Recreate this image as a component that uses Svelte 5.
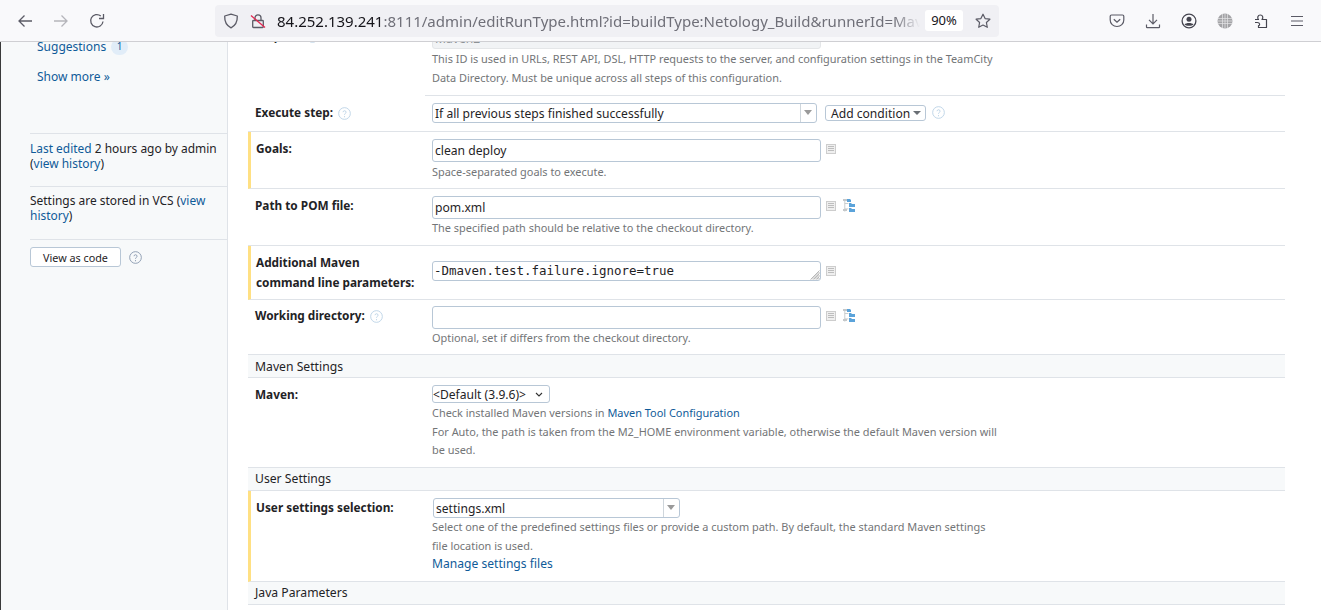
<script>
  const fileTree = 'M2 1v13M2 5h4M2 11h4';
  const chevron = `url("data:image/svg+xml,%3Csvg xmlns='http://www.w3.org/2000/svg' width='8' height='5'%3E%3Cpath d='M1 1l3 3 3-3' fill='none' stroke='%23333' stroke-width='1.1'/%3E%3C/svg%3E")`;
</script>

{#snippet help(cls = '')}
  <svg class="help {cls}" viewBox="0 0 14 14" width="13" height="13" aria-hidden="true">
    <circle cx="7" cy="7" r="6.300" fill="none" stroke="currentColor" />
    <path d="M5.400 5.600c0-2.100 3.300-2.100 3.300 0 0 1.300-1.700 1.300-1.700 2.800" fill="none" stroke="currentColor" />
    <circle cx="7" cy="10.400" r=".6" fill="currentColor" />
  </svg>
{/snippet}

{#snippet listIcon()}
  <svg class="side-icon" viewBox="0 0 10 10" width="10" height="10" aria-hidden="true">
    <rect x=".5" y=".5" width="9" height="9" fill="#efefef" stroke="#cdcdcd" />
    <path d="M2 2.500h6M2 4.500h6M2 6.500h6" stroke="#bdbdbd" />
  </svg>
{/snippet}

{#snippet treeIcon()}
  <svg class="side-icon tree" viewBox="0 0 13 13" width="13" height="13" aria-hidden="true">
    <path d={fileTree} fill="none" stroke="#c4c8ca" transform="scale(.9)" />
    <path d="M0 0h4v2H0zM0 10h4v2H0z" fill="#c4c8ca" />
    <path d="M4 0h3l1 1v2H4zM6 4h2l1 1h3v3H6zM6 9h2l1 1h3v3H6z" fill="#5ba3da" />
  </svg>
{/snippet}

<div class="page">
  <header class="toolbar">
    <div class="nav">
      <svg viewBox="0 0 16 16" width="16" height="16" aria-hidden="true"><path d="M15 8H2M7.500 2.500 2 8l5.500 5.500" fill="none" stroke="#5b5b66" stroke-width="1.300" /></svg>
      <svg viewBox="0 0 16 16" width="16" height="16" aria-hidden="true"><path d="M1 8h13M8.500 2.500 14 8l-5.500 5.500" fill="none" stroke="#b5b5ba" stroke-width="1.300" /></svg>
      <svg viewBox="0 0 16 16" width="16" height="16" aria-hidden="true"><path d="M14 8.500A6.200 6.200 0 1 1 11.800 3M14.500 1v4.500H10" fill="none" stroke="#5b5b66" stroke-width="1.300" /></svg>
    </div>
    <div class="urlbar">
      <svg class="shield" viewBox="0 0 16 16" width="16" height="16" aria-hidden="true"><path d="M8 1.200 14.300 3c.2 5.500-1.600 9.500-6.300 11.800C3.300 12.500 1.500 8.500 1.700 3z" fill="none" stroke="#5b5b66" stroke-width="1.300" stroke-linejoin="round" /></svg>
      <svg class="lock" viewBox="0 0 16 16" width="16" height="16" aria-hidden="true">
        <path d="M5 7.500V4.800a3 3 0 0 1 6 0v2.700M3.500 7.500h9c.5 0 .8.300.8.800v5.400c0 .5-.3.800-.8.800h-9c-.5 0-.8-.3-.8-.8V8.300c0-.5.300-.8.800-.8z" fill="none" stroke="#5b5b66" stroke-width="1.300" />
        <path d="m1 2.500 14 12" stroke="#e22850" stroke-width="1.300" />
      </svg>
      <div class="url"><span class="host">84.252.139.241</span>:8111/admin/editRunType.html?id=buildType:Netology_Build&amp;runnerId=Mav</div>
      <span class="zoom-level">90%</span>
      <svg class="star" viewBox="0 0 16 16" width="16" height="16" aria-hidden="true"><path d="m8 1.200 2.100 4.400 4.800.6-3.500 3.300.9 4.800L8 12l-4.300 2.300.9-4.800L1.100 6.200l4.800-.6z" fill="none" stroke="#5b5b66" stroke-width="1.200" stroke-linejoin="round" /></svg>
    </div>
    <div class="tools">
      <svg viewBox="0 0 16 16" width="16" height="16" aria-hidden="true"><path d="M2.500 2h11c.8 0 1.300.5 1.300 1.300V7c0 3.800-3 6.500-6.800 6.500S1.200 10.800 1.200 7V3.300C1.200 2.500 1.700 2 2.500 2z" fill="none" stroke="#5b5b66" stroke-width="1.200" /><path d="m4.800 6.200 3.200 3 3.200-3" fill="none" stroke="#5b5b66" stroke-width="1.300" /></svg>
      <svg viewBox="0 0 16 16" width="16" height="16" aria-hidden="true"><path d="M8 1v9.500M4 6.800l4 4 4-4M1.500 11.500V14c0 .4.200.6.600.6h11.800c.4 0 .6-.2.600-.6v-2.500" fill="none" stroke="#5b5b66" stroke-width="1.200" /></svg>
      <svg viewBox="0 0 16 16" width="16" height="16" aria-hidden="true"><circle cx="8" cy="8" r="6.900" fill="none" stroke="#45454f" stroke-width="1.300" /><circle cx="8" cy="6.300" r="2.500" fill="#45454f" /><path d="M3.500 11.500c1.500-2 7.500-2 9 0-1.500 1.800-7.500 1.800-9 0z" fill="#45454f" /></svg>
      <svg viewBox="0 0 16 16" width="16" height="16" aria-hidden="true"><circle cx="8" cy="8" r="7.500" fill="#a3a3a6" /><path d="M.5 5.500h15M.5 8h15M.5 10.500h15M5.500 1v14M8 .5v15M10.500 1v14" stroke="#e6e6e8" stroke-width=".7" /></svg>
      <svg viewBox="0 0 16 16" width="16" height="16" aria-hidden="true"><path d="M2 6.500h3.500c-1.500-1.500-.8-4.500 1.800-4.500s3.200 3 1.700 4.500h4.500v8H5.500v-1.800c1.500 0 1.800-3.200-1.200-3.200H2" fill="none" stroke="#45454f" stroke-width="1.200" stroke-linejoin="round" /></svg>
      <svg viewBox="0 0 16 16" width="16" height="16" aria-hidden="true"><path d="M2 3.500h12M2 8h12M2 12.500h12" stroke="#5b5b66" stroke-width="1.200" /></svg>
    </div>
  </header>

  <div class="body">
    <aside class="sidebar">
      <div class="side-links">
        <div class="side-link"><a href="#s">Suggestions</a><span class="count">1</span></div>
        <div class="side-link"><a href="#m">Show more »</a></div>
      </div>
      <div class="side-block edited"><a href="#e">Last edited</a> 2 hours ago by admin<br />(<a href="#h">view history</a>)</div>
      <div class="side-block vcs">Settings are stored in VCS (<a href="#h">view<br />history</a>)</div>
      <div class="code-row">
        <button class="code-btn">View as code</button>
        {@render help('grey')}
      </div>
    </aside>

    <main class="main">
      <div class="form">
        <div class="row first">
          <div class="label">Step ID:{@render help()}</div>
          <div class="value">
            <input class="field disabled" value="Maven2" disabled />
            <p class="note">This ID is used in URLs, REST API, DSL, HTTP requests to the server, and configuration settings in the TeamCity<br />Data Directory. Must be unique across all steps of this configuration.</p>
          </div>
        </div>

        <div class="row execute">
          <div class="label">Execute step:{@render help()}</div>
          <div class="value inline">
            <div class="combo wide"><span>If all previous steps finished successfully</span><i class="arrow-box"></i></div>
            <button class="cond">Add condition <i class="caret"></i></button>
            {@render help()}
          </div>
        </div>

        <div class="row goals changed">
          <div class="label">Goals:</div>
          <div class="value">
            <div class="line"><input class="field" value="clean deploy" />{@render listIcon()}</div>
            <p class="note">Space-separated goals to execute.</p>
          </div>
        </div>

        <div class="row pom">
          <div class="label">Path to POM file:</div>
          <div class="value">
            <div class="line"><input class="field" value="pom.xml" />{@render listIcon()}{@render treeIcon()}</div>
            <p class="note tight">The specified path should be relative to the checkout directory.</p>
          </div>
        </div>

        <div class="row extra changed">
          <div class="label">Additional Maven<br />command line parameters:</div>
          <div class="value">
            <div class="line">
              <div class="area-wrap">
                <textarea class="field mono" rows="1">-Dmaven.test.failure.ignore=true</textarea>
                <svg class="grip" viewBox="0 0 10 10" width="10" height="10" aria-hidden="true"><path d="M9.500 .5 .5 9.500M9.500 2 2 9.500M9.500 3.500 3.500 9.500M9.500 5 5 9.500M9.500 6.500 6.500 9.500M9.500 8 8 9.500" stroke="#8a8a8a" stroke-width=".6" /></svg>
              </div>
              {@render listIcon()}
            </div>
          </div>
        </div>

        <div class="row workdir">
          <div class="label">Working directory:{@render help()}</div>
          <div class="value">
            <div class="line"><input class="field" value="" />{@render listIcon()}{@render treeIcon()}</div>
            <p class="note tight">Optional, set if differs from the checkout directory.</p>
          </div>
        </div>

        <div class="section maven-head">Maven Settings</div>

        <div class="row maven">
          <div class="label">Maven:</div>
          <div class="value">
            <select class="native" style:background-image={chevron}><option>&lt;Default (3.9.6)&gt;</option></select>
            <p class="note">Check installed Maven versions in <a href="#t">Maven Tool Configuration</a><br />For Auto, the path is taken from the M2_HOME environment variable, otherwise the default Maven version will<br />be used.</p>
          </div>
        </div>

        <div class="section">User Settings</div>

        <div class="row settings changed">
          <div class="label">User settings selection:</div>
          <div class="value">
            <div class="combo narrow"><span>settings.xml</span><i class="arrow-box"></i></div>
            <p class="note tight">Select one of the predefined settings files or provide a custom path. By default, the standard Maven settings<br />file location is used.</p>
            <a class="manage" href="#f">Manage settings files</a>
          </div>
        </div>

        <div class="section">Java Parameters</div>
      </div>
    </main>
  </div>
</div>

<style>
  :global(body) {
    margin: 0;
    overflow: hidden;
    background: #fff;
  }
  .page {
    height: 610px;
    display: flex;
    flex-direction: column;
    overflow: hidden;
    font-family: 'Noto Sans', sans-serif;
    font-size: 12.100px;
    color: #1f2326;
  }
  a {
    color: #0f5b99;
    text-decoration: none;
  }
  p {
    margin: 0;
  }

  .toolbar {
    height: 41px;
    flex: none;
    display: flex;
    align-items: center;
    background: #f9f9fb;
    border-bottom: 1px solid #cfcfd3;
  }
  .toolbar svg {
    flex: none;
  }
  .nav {
    width: 215px;
    display: flex;
    gap: 20px;
    padding-left: 17px;
    box-sizing: border-box;
  }
  .urlbar {
    width: 784px;
    height: 32px;
    display: flex;
    align-items: center;
    background: #f0f0f4;
    border-radius: 4px;
    box-sizing: border-box;
    padding-left: 8px;
  }
  .lock {
    margin-left: 11px;
  }
  .url {
    width: 643px;
    margin-left: 11px;
    white-space: nowrap;
    overflow: hidden;
    font-size: 15px;
    color: #6f6f78;
    mask-image: linear-gradient(to right, #000 96%, transparent);
  }
  .host {
    color: #15141a;
  }
  .zoom-level {
    width: 38px;
    height: 21px;
    margin-left: 5px;
    background: #fff;
    border-radius: 3px;
    text-align: center;
    font-size: 13px;
    line-height: 21px;
    color: #15141a;
  }
  .star {
    margin-left: 12px;
  }
  .tools {
    display: flex;
    gap: 20px;
    padding-left: 110px;
  }

  .body {
    flex: 1;
    display: flex;
    min-height: 0;
  }
  .sidebar {
    width: 228px;
    flex: none;
    box-sizing: border-box;
    background: #f7f9fa;
    border-left: 1px solid #3a3a3a;
    border-right: 1px solid #dfe3e8;
    padding-left: 29px;
    overflow: hidden;
    line-height: 15px;
  }
  .side-links {
    margin-top: -11px;
    padding: 1px 0 0 7px;
    height: 103px;
    box-sizing: border-box;
    border-bottom: 1px solid #dfe3e8;
  }
  .side-link {
    display: flex;
    align-items: center;
    height: 30px;
    font-size: 12px;
    line-height: 10px;
  }
  .count {
    margin-left: 5px;
    min-width: 17px;
    height: 16px;
    line-height: 15px;
    text-align: center;
    font-size: 10px;
    border-radius: 8px;
    background: #e1edf8;
    color: #0f5b99;
  }
  .side-block {
    font-size: 11.950px;
    border-bottom: 1px solid #dfe3e8;
  }
  .edited {
    padding: 7px 0 15px;
  }
  .vcs {
    padding: 6px 0 16px;
  }
  .code-row {
    display: flex;
    align-items: center;
    gap: 8px;
    padding-top: 7px;
  }
  .code-btn {
    width: 91px;
    height: 20px;
    padding: 0;
    background: #fff;
    border: 1px solid #b8c7d6;
    border-radius: 3px;
    font: 10.800px 'Noto Sans', sans-serif;
    color: #1f2326;
  }
  .help {
    color: #bcd3e6;
    vertical-align: -3px;
    margin-left: 5px;
  }
  .help.grey {
    color: #8a9bb0;
    margin-left: 0;
  }

  .main {
    flex: 1;
    min-width: 0;
    padding: 0 36px 0 20px;
    overflow: hidden;
  }
  .form {
    margin-top: -22px;
  }
  .row {
    display: grid;
    grid-template-columns: 177px 1fr;
    box-sizing: border-box;
    border-bottom: 1px solid #dfe3e8;
    padding-left: 7px;
    padding-top: 7px;
  }
  .row.changed {
    border-left: 3px solid #ffe083;
    padding-left: 5px;
    grid-template-columns: 176px 1fr;
  }
  .label {
    font-weight: 700;
    font-size: 11.800px;
    line-height: 18px;
  }
  .value {
    min-width: 0;
  }
  .first {
    height: 76px;
    border-bottom: 0;
    padding-top: 0;
  }
  .first .value {
    margin-left: -7px;
    padding-left: 7px;
    border-bottom: 1px solid #dfe3e8;
  }
  .first .label {
    padding-top: 6px;
  }
  .field {
    width: 389px;
    height: 23px;
    box-sizing: border-box;
    padding: 0 2px;
    border: 1px solid #b8c7d6;
    border-radius: 3px;
    background: #fff;
    font: 12.150px 'Noto Sans', sans-serif;
    color: #1f2326;
    outline: none;
    display: block;
    flex: none;
  }
  .field.disabled {
    background: #f1f3f5;
    color: #8d9296;
    margin-top: 7px;
    border-color: #e4e6e8;
    height: 22px;
  }
  .area-wrap {
    position: relative;
    flex: none;
    margin-top: 9px;
  }
  .mono {
    font: 12.460px 'DejaVu Sans Mono', monospace;
    line-height: 15px;
    padding: 1px;
    height: 20px;
    resize: none;
    overflow: hidden;
  }
  .grip {
    position: absolute;
    right: 1px;
    bottom: 1px;
  }
  .line {
    display: flex;
    align-items: flex-start;
  }
  .side-icon {
    flex: none;
    margin: 5px 0 0 5px;
  }
  .area-wrap + .side-icon {
    margin-top: 14px;
  }
  .side-icon.tree {
    margin: 3px 0 0 7px;
  }
  .note {
    font-size: 10.930px;
    line-height: 18.500px;
    color: #737577;
    margin-top: 1px;
  }
  .note.tight {
    margin-top: 0;
  }

  .execute {
    height: 36px;
  }
  .inline {
    display: flex;
    align-items: flex-start;
  }
  .inline .help {
    margin: 3px 0 0 6px;
  }
  .combo {
    height: 20px;
    box-sizing: border-box;
    display: flex;
    justify-content: space-between;
    align-items: center;
    border: 1px solid #b8c7d6;
    border-radius: 3px;
    background: #fff;
    padding-left: 2px;
  }
  .combo.wide {
    width: 385px;
  }
  .combo.narrow {
    width: 247px;
    margin-left: 1px;
  }
  .arrow-box {
    width: 15px;
    height: 100%;
    border-left: 1px solid #cfd6dc;
    position: relative;
  }
  .arrow-box::after {
    content: '';
    position: absolute;
    left: 3px;
    top: 6px;
    border: 4.500px solid transparent;
    border-top: 5px solid #9a9a9a;
    border-bottom: 0;
  }
  .cond {
    height: 16px;
    margin: 2px 0 0 8px;
    padding: 0 4px 0 5px;
    background: #fff;
    border: 1px solid #b8c7d6;
    border-radius: 3px;
    font: 12.100px 'Noto Sans', sans-serif;
    color: #1f2326;
    display: flex;
    align-items: center;
    gap: 3px;
  }
  .caret {
    border: 4px solid transparent;
    border-top: 4px solid #6a6f75;
    border-bottom: 0;
  }

  .goals,
  .pom {
    height: 57px;
  }
  .extra {
    height: 54px;
    padding-top: 6px;
  }
  .extra .label {
    line-height: 20px;
  }
  .workdir {
    height: 55px;
    padding-top: 6px;
  }
  .section {
    height: 23px;
    box-sizing: border-box;
    padding-left: 7px;
    background: #f7f9fa;
    border-bottom: 1px solid #dfe3e8;
    font-size: 12.200px;
    line-height: 21px;
  }
  .maven-head {
    line-height: 23px;
  }
  .maven {
    height: 90px;
    padding-top: 6px;
  }
  .maven .label {
    padding-top: 1px;
  }
  .maven .native {
    margin-top: 1px;
  }
  .native {
    width: 118px;
    height: 18px;
    display: block;
    padding: 0;
    appearance: none;
    background-color: #fff;
    background-repeat: no-repeat;
    background-position: right 6px center;
    border: 1px solid #b8c7d6;
    border-radius: 3px;
    font: 12.100px 'Noto Sans', sans-serif;
    color: #1f2326;
  }
  .settings {
    height: 91px;
  }
  .manage {
    line-height: 18px;
    display: block;
  }
</style>
